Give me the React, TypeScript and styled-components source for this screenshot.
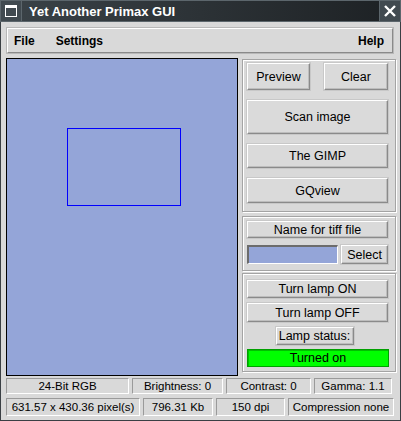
import React from 'react';
import styled, { createGlobalStyle } from 'styled-components';

const GlobalStyle = createGlobalStyle`
    html, body {
        margin: 0;
        padding: 0;
        background: #d9d9d9;
    }
    * {
        box-sizing: border-box;
    }
`;

const Window = styled.div`
    width: 401px;
    height: 421px;
    display: flex;
    flex-direction: column;
    background: #d9d9d9;
    border-left: 1px solid #3a3f44;
    border-right: 1px solid #3a3f44;
    border-bottom: 1px solid #3a3f44;
    font-family: "Liberation Sans", Arial, sans-serif;
    font-size: 12px;
    color: #000;
`;

const TitleBar = styled.div`
    height: 22px;
    display: flex;
    align-items: stretch;
    background: linear-gradient(to right, #3b4348, #1d2124);
    margin: 0 -1px;
`;

const TitleButton = styled.div`
    width: 22px;
    display: flex;
    align-items: center;
    justify-content: center;
    background: #414a50;
    border: 1px solid #5c666c;
`;

const TitleText = styled.div`
    flex: 1;
    padding-left: 7px;
    display: flex;
    align-items: center;
    color: #fff;
    font-weight: bold;
    font-size: 13px;
    border-top: 1px solid #5c666c;
    border-bottom: 1px solid #5c666c;
`;

const Body = styled.div`
    flex: 1;
    display: flex;
    flex-direction: column;
    padding: 6px 4px 4px 5px;
`;

const MenuBar = styled.div`
    height: 25px;
    display: flex;
    align-items: center;
    padding: 0 8px 0 6px;
    gap: 21px;
    border-top: 1px solid #fff;
    border-left: 1px solid #fff;
    border-bottom: 1px solid #8a8a8a;
    border-right: 1px solid #8a8a8a;
    box-shadow: 0 0 0 1px #b8b8b8;
    margin: 0 3px 5px 1px;
`;

const MenuItem = styled.span<{ $right?: boolean }>`
    font-weight: bold;
    font-size: 12px;
    margin-left: ${p => (p.$right ? 'auto' : '0')};
`;

const Main = styled.div`
    display: flex;
    gap: 4px;
`;

const Canvas = styled.div`
    position: relative;
    width: 232px;
    height: 318px;
    background: #94a5d8;
    border: 1px solid #000;
`;

const Selection = styled.div`
    position: absolute;
    left: 60px;
    top: 69px;
    width: 114px;
    height: 78px;
    border: 1px solid #0000ff;
`;

const Side = styled.div`
    flex: 1;
    display: flex;
    flex-direction: column;
    padding-top: 1px;
`;

const Frame = styled.div<{ $gap: number; $pad: string; $mb?: number }>`
    display: flex;
    flex-direction: column;
    gap: ${p => p.$gap}px;
    padding: ${p => p.$pad};
    margin-bottom: ${p => p.$mb ?? 0}px;
    border: 1px solid #a4a4a4;
    box-shadow: inset 1px 1px 0 #fff, 1px 1px 0 #fff;
`;

const Row = styled.div`
    display: flex;
    gap: 2px;
    justify-content: space-between;
`;

const Button = styled.div<{ $h: number; $w?: number }>`
    height: ${p => p.$h}px;
    width: ${p => (p.$w ? `${p.$w}px` : 'auto')};
    display: flex;
    align-items: center;
    justify-content: center;
    background: #dadada;
    font-size: 12.5px;
    border-top: 1px solid #fff;
    border-left: 1px solid #fff;
    border-bottom: 1px solid #8a8a8a;
    border-right: 1px solid #8a8a8a;
    box-shadow: inset -1px -1px 0 #bdbdbd, 0 0 0 1px #c8c8c8;
    margin: 1px;
`;

const Entry = styled.div`
    flex: 1;
    height: 19px;
    margin: 1px 0 0 1px;
    background: #94a5d8;
    border-top: 2px solid #6c6c6c;
    border-left: 2px solid #6c6c6c;
    border-bottom: 1px solid #fff;
    border-right: 1px solid #fff;
`;

const LampState = styled.div`
    height: 18px;
    display: flex;
    align-items: center;
    justify-content: center;
    background: #00ff00;
    border: 1px solid #00a000;
    box-shadow: inset 1px 1px 0 #00c000;
    font-size: 12.5px;
    margin: 0 0 0 1px;
`;

const StatusRows = styled.div`
    display: flex;
    flex-direction: column;
    gap: 4px;
    padding-top: 2px;
`;

const StatusRow = styled.div<{ $cols: string }>`
    display: grid;
    grid-template-columns: ${p => p.$cols};
    column-gap: 3px;
`;

const Cell = styled.div<{ $h: number }>`
    height: ${p => p.$h}px;
    display: flex;
    align-items: center;
    justify-content: center;
    font-size: 11.5px;
    border-top: 1px solid #9a9a9a;
    border-left: 1px solid #9a9a9a;
    border-bottom: 1px solid #fff;
    border-right: 1px solid #fff;
    white-space: nowrap;
`;

const WinIcon = () => (
    <svg width="12" height="12" viewBox="0 0 12 12">
        <rect x="0.5" y="0.5" width="11" height="11" fill="none" stroke="#fff" strokeWidth="1" />
        <rect x="0" y="0" width="12" height="3" fill="#fff" />
    </svg>
);

const CloseIcon = () => (
    <svg width="12" height="12" viewBox="0 0 12 12">
        <path d="M1 1 L11 11 M11 1 L1 11" stroke="#fff" strokeWidth="2.4" />
    </svg>
);

const StatusLamp = styled(Button)`
    align-self: center;
    position: relative;
    left: -3px;
`;

const App: React.FC = () => {
    return (
        <>
            <GlobalStyle />
            <Window>
                <TitleBar>
                    <TitleButton><WinIcon /></TitleButton>
                    <TitleText>Yet Another Primax GUI</TitleText>
                    <TitleButton><CloseIcon /></TitleButton>
                </TitleBar>
                <Body>
                    <MenuBar>
                        <MenuItem>File</MenuItem>
                        <MenuItem>Settings</MenuItem>
                        <MenuItem $right>Help</MenuItem>
                    </MenuBar>
                    <Main>
                        <Canvas>
                            <Selection />
                        </Canvas>
                        <Side>
                            <Frame $gap={8} $pad="2px 6px 7px 3px" $mb={4}>
                                <Row>
                                    <Button $h={27} $w={63}>Preview</Button>
                                    <Button $h={27} $w={64}>Clear</Button>
                                </Row>
                                <Button $h={34}>Scan image</Button>
                                <Button $h={24}>The GIMP</Button>
                                <Button $h={25}>GQview</Button>
                            </Frame>
                            <Frame $gap={5} $pad="3px 6px 5px 3px" $mb={2}>
                                <Button $h={17}>Name for tiff file</Button>
                                <Row>
                                    <Entry />
                                    <Button $h={19} $w={47}>Select</Button>
                                </Row>
                            </Frame>
                            <Frame $gap={3} $pad="5px 6px 4px 3px">
                                <Button $h={18}>Turn lamp ON</Button>
                                <Button $h={19}>Turn lamp OFF</Button>
                                <StatusLamp $h={18} $w={78}>Lamp status:</StatusLamp>
                                <LampState>Turned on</LampState>
                            </Frame>
                        </Side>
                    </Main>
                    <StatusRows>
                        <StatusRow $cols="123px 91px 85px 78px">
                            <Cell $h={16}>24-Bit RGB</Cell>
                            <Cell $h={16}>Brightness: 0</Cell>
                            <Cell $h={16}>Contrast: 0</Cell>
                            <Cell $h={16}>Gamma: 1.1</Cell>
                        </StatusRow>
                        <StatusRow $cols="134px 70px 69px 106px">
                            <Cell $h={18}>631.57 x 430.36 pixel(s)</Cell>
                            <Cell $h={18}>796.31 Kb</Cell>
                            <Cell $h={18}>150 dpi</Cell>
                            <Cell $h={18}>Compression none</Cell>
                        </StatusRow>
                    </StatusRows>
                </Body>
            </Window>
        </>
    );
};

export default App;
